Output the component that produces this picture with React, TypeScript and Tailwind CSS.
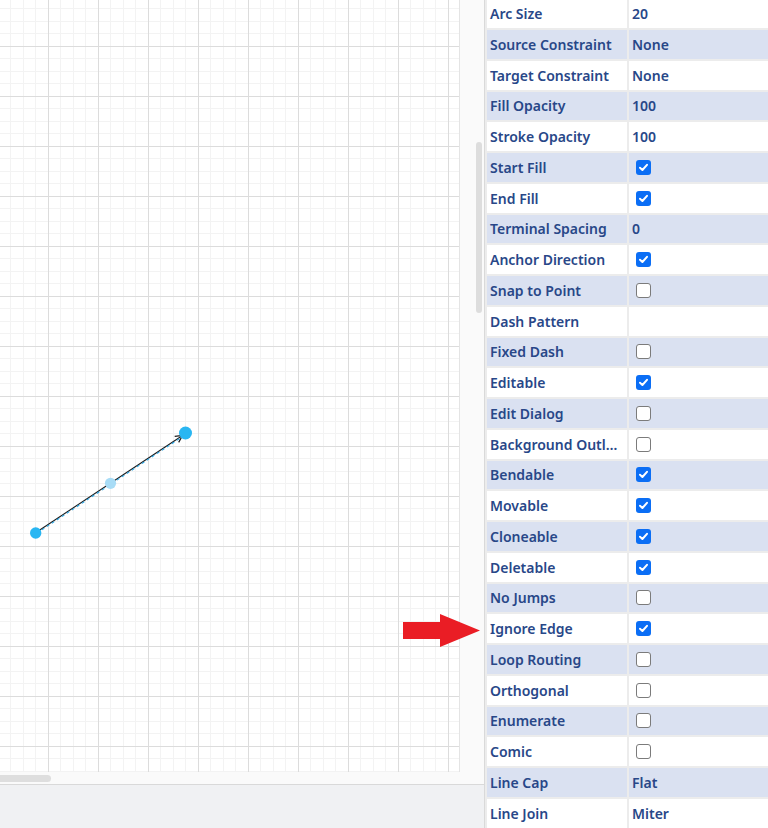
import React from "react";

type Val = string | boolean;
const rows: [string, Val][] = [
  ["Arc Size", "20"],
  ["Source Constraint", "None"],
  ["Target Constraint", "None"],
  ["Fill Opacity", "100"],
  ["Stroke Opacity", "100"],
  ["Start Fill", true],
  ["End Fill", true],
  ["Terminal Spacing", "0"],
  ["Anchor Direction", true],
  ["Snap to Point", false],
  ["Dash Pattern", ""],
  ["Fixed Dash", false],
  ["Editable", true],
  ["Edit Dialog", false],
  ["Background Outl\u2026", false],
  ["Bendable", true],
  ["Movable", true],
  ["Cloneable", true],
  ["Deletable", true],
  ["No Jumps", false],
  ["Ignore Edge", true],
  ["Loop Routing", false],
  ["Orthogonal", false],
  ["Enumerate", false],
  ["Comic", false],
  ["Line Cap", "Flat"],
  ["Line Join", "Miter"],
];

function Check({ on }: { on: boolean }) {
  if (on) {
    return (
      <span className="flex w-[15px] h-[15px] items-center justify-center rounded-[3px] bg-[#0b6ef5]">
        <svg width="11" height="11" viewBox="0 0 11 11">
          <path d="M2 5.8 L4.4 8 L9 2.8" fill="none" stroke="#fff" strokeWidth="2" strokeLinecap="round" strokeLinejoin="round" />
        </svg>
      </span>
    );
  }
  return <span className="block w-[15px] h-[15px] rounded-[3px] border border-[#7b7b7b] bg-white" />;
}

function Grid() {
  const W = 460;
  const H = 772;
  const vx: { p: number; major: boolean }[] = [];
  for (let i = 0; 10 + 12.5 * i < W; i++) {
    vx.push({ p: Math.round(10 + 12.5 * i), major: i % 4 === 3 });
  }
  const hy: { p: number; major: boolean }[] = [];
  for (let i = 0; 8.3 + 12.5 * i < H; i++) {
    hy.push({ p: Math.round(8.3 + 12.5 * i), major: i % 4 === 3 });
  }
  const d = { x: 0.831, y: -0.556 };
  const n = { x: 0.556, y: 0.831 };
  const T = { x: 182.5, y: 435.5 };
  const B = { x: T.x - 7 * d.x, y: T.y - 7 * d.y };
  const a1 = { x: B.x + 3.6 * n.x, y: B.y + 3.6 * n.y };
  const a2 = { x: B.x - 3.6 * n.x, y: B.y - 3.6 * n.y };
  return (
    <svg width={W} height={H} className="block" shapeRendering="crispEdges">
      <rect x="0" y="0" width={W} height={H} fill="#ffffff" />
      {vx.filter((l) => !l.major).map((l) => (
        <line key={"vm" + l.p} x1={l.p + 0.5} y1={0} x2={l.p + 0.5} y2={H} stroke="#f3f3f3" strokeWidth="1" />
      ))}
      {hy.filter((l) => !l.major).map((l) => (
        <line key={"hm" + l.p} x1={0} y1={l.p + 0.5} x2={W} y2={l.p + 0.5} stroke="#f3f3f3" strokeWidth="1" />
      ))}
      {vx.filter((l) => l.major).map((l) => (
        <line key={"vM" + l.p} x1={l.p + 0.5} y1={0} x2={l.p + 0.5} y2={H} stroke="#dcdcdc" strokeWidth="1" />
      ))}
      {hy.filter((l) => l.major).map((l) => (
        <line key={"hM" + l.p} x1={0} y1={l.p + 0.5} x2={W} y2={l.p + 0.5} stroke="#dcdcdc" strokeWidth="1" />
      ))}
      <line x1={W - 0.5} y1={0} x2={W - 0.5} y2={H} stroke="#e4e4e4" strokeWidth="1" />
      <g shapeRendering="geometricPrecision">
        <line x1="36" y1="532.5" x2={T.x} y2={T.y} stroke="#1a1a1a" strokeWidth="1.1" />
        <line x1="36.8" y1="533.2" x2={T.x + 0.5} y2={T.y + 0.8} stroke="#29a8e8" strokeWidth="1.1" strokeDasharray="3 3" />
        <polyline points={`${a1.x},${a1.y} ${T.x},${T.y} ${a2.x},${a2.y}`} fill="none" stroke="#1a1a1a" strokeWidth="1.2" />
        <circle cx="110.5" cy="483.3" r="5.6" fill="#a8dcf6" />
        <circle cx="35.7" cy="533" r="5.7" fill="#29b6f2" />
        <circle cx="185.5" cy="433" r="6.5" fill="#29b6f2" />
      </g>
    </svg>
  );
}

export default function App() {
  return (
    <div
      className="relative flex w-[768px] h-[828px] overflow-hidden bg-white"
      style={{ fontFamily: '"Noto Sans", "Open Sans", sans-serif' }}
    >
      <div className="flex w-[484px] shrink-0 flex-col">
        <div className="flex h-[772px]">
          <div className="w-[460px] h-[772px]">
            <Grid />
          </div>
          <div className="flex w-[24px] flex-col bg-[#fafafa] pl-[16px] pt-[142px]">
            <div className="w-[6px] h-[171px] rounded-full bg-[#dddddd]" />
          </div>
        </div>
        <div className="h-[12px] bg-[#fafafa] pt-[3px]">
          <div className="w-[51px] h-[7px] rounded-r-full bg-[#dedede]" />
        </div>
        <div className="flex-1 border-t border-[#d9d9d9] bg-[#f0f1f3]" />
      </div>

      <div className="flex-1 border-l border-[#d9d9d9] bg-[#ececec] pl-[2px]">
        <div className="-mt-[0.75px] flex flex-col gap-[2px]">
          {rows.map(([label, val], i) => {
            const bg = i % 2 === 1 ? "bg-[#dae1f1]" : "bg-white";
            return (
              <div key={label} className="flex h-[28.75px] gap-[2px]">
                <div className={`flex w-[140px] shrink-0 items-center px-[3px] ${bg}`}>
                  <span className="whitespace-nowrap text-[14px] font-semibold text-[#284788]">{label}</span>
                </div>
                <div className={`flex flex-1 items-center px-[3px] ${bg}`}>
                  {typeof val === "boolean" ? (
                    <span className="pl-[4px]">
                      <Check on={val} />
                    </span>
                  ) : (
                    <span className="text-[14px] font-semibold text-[#284788]">{val}</span>
                  )}
                </div>
              </div>
            );
          })}
        </div>
      </div>

      <svg className="absolute left-[402px] top-[612px]" width="86" height="40" viewBox="0 0 86 40">
        <polygon points="1,10 38,10 38,2 78,18.5 38,35 38,27 1,27" fill="#ea1d25" />
      </svg>
    </div>
  );
}
